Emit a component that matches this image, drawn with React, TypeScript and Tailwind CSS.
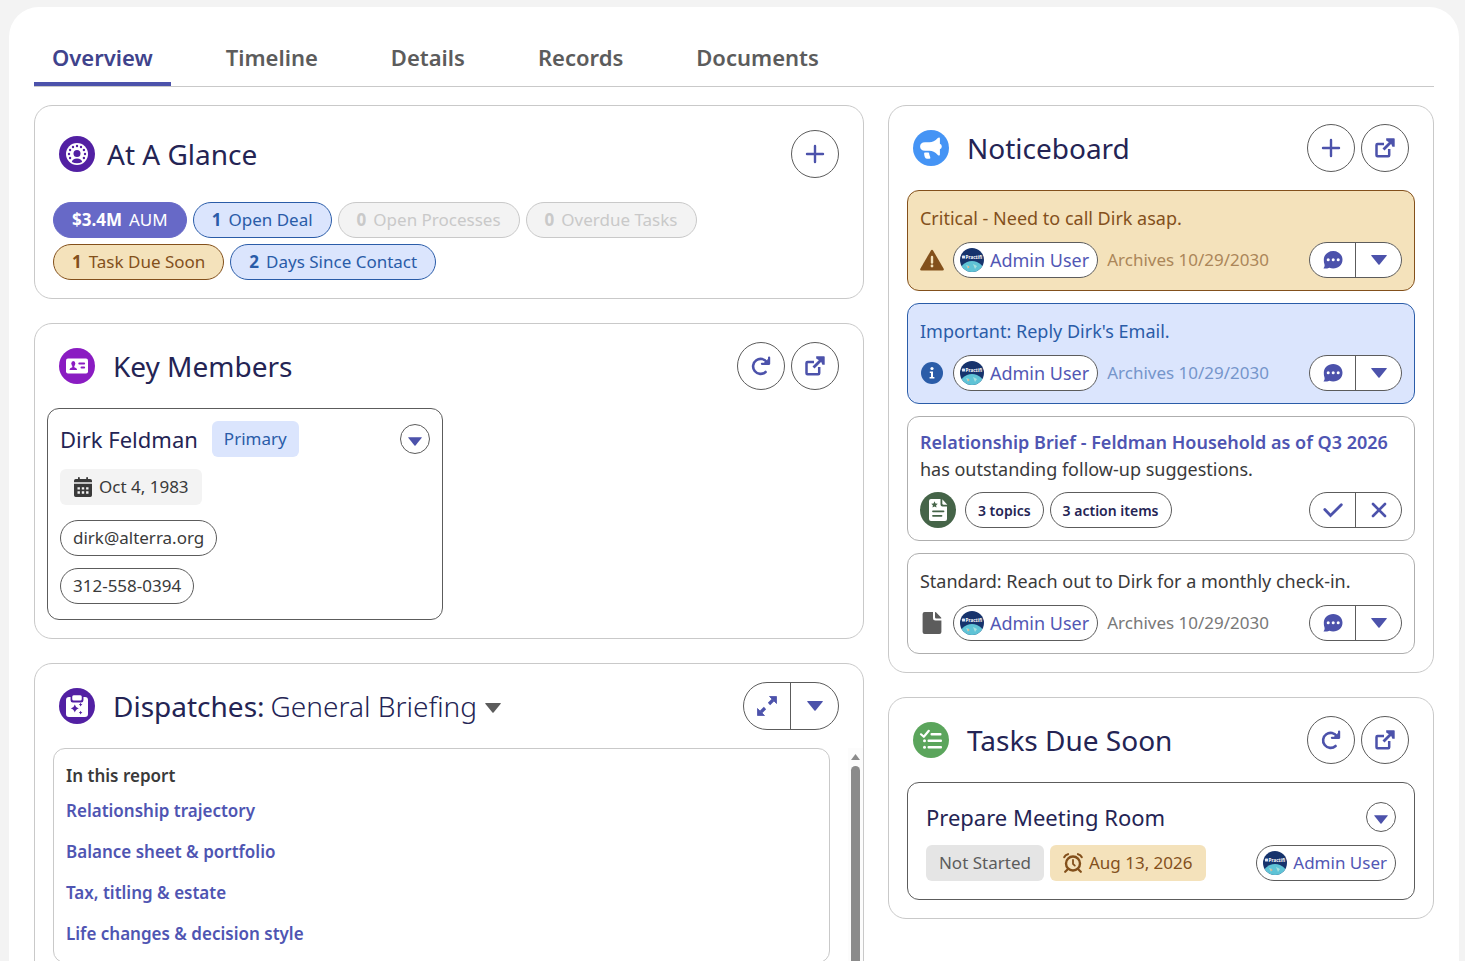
import type { ReactNode } from 'react';
import clsx from 'clsx';

const tabs = ['Overview', 'Timeline', 'Details', 'Records', 'Documents'];

const metrics = [
  { value: '$3.4M', label: 'AUM', tone: 'border-[#6769c7] bg-[#6769c7] text-white' },
  { value: '1', label: 'Open Deal', tone: 'border-[#2a5ca8] bg-[#dbe5fd] text-[#2a5ca8]' },
  { value: '0', label: 'Open Processes', tone: 'border-[#c9c9c9] bg-[#f3f3f3] text-[#c9c9c9]' },
  { value: '0', label: 'Overdue Tasks', tone: 'border-[#c9c9c9] bg-[#f3f3f3] text-[#c9c9c9]' },
  { value: '1', label: 'Task Due Soon', tone: 'border-[#83501b] bg-[#f4e2bb] text-[#83501b]' },
  { value: '2', label: 'Days Since Contact', tone: 'border-[#2a5ca8] bg-[#dbe5fd] text-[#2a5ca8]' },
];

const reportLinks = [
  'Relationship trajectory',
  'Balance sheet & portfolio',
  'Tax, titling & estate',
  'Life changes & decision style',
];

/* ---------- icons ---------- */

function PlusIcon() {
  return (
    <svg className="h-5 w-5" viewBox="0 0 20 20" stroke="currentColor" strokeWidth="2.4" strokeLinecap="round">
      <path d="M10 2v16M2 10h16" />
    </svg>
  );
}

function OpenIcon() {
  return (
    <svg className="h-5 w-5" viewBox="0 0 20 20" fill="none" stroke="currentColor">
      <path d="M9 6H2.500Q1.500 6 1.500 7v10.300q0 1 1 1h10.700q1 0 1-1V11" strokeWidth="2.500" />
      <path d="M8.500 11.500 17 3" strokeWidth="2.800" />
      <path d="M11.200.3H19q.7 0 .7.7v7.800h-2.300L16 5.400 11.200 2.600z" fill="currentColor" stroke="none" />
    </svg>
  );
}

function RefreshIcon() {
  return (
    <svg className="h-5 w-5" viewBox="0 0 20 20" fill="none" stroke="currentColor">
      <path d="M14.600 16A7.500 7.500 0 1 1 16 6.500" strokeWidth="2.600" strokeLinecap="round" />
      <path d="M18.100 1.500v6.300h-7.200" strokeWidth="2.200" strokeLinecap="round" strokeLinejoin="round" />
      <path d="M17.500 3v4h-4z" fill="currentColor" />
    </svg>
  );
}

function ExpandIcon() {
  return (
    <svg className="h-5 w-5" viewBox="0 0 20 20" fill="currentColor" stroke="currentColor">
      <path d="M12 8l4-4M8 12l-4 4" strokeWidth="3.200" />
      <path d="M12.500.5h7v7zM.5 12.500v7h7z" strokeWidth=".8" strokeLinejoin="round" />
    </svg>
  );
}

function CaretIcon({ className = 'h-[10px] w-4' }: { className?: string }) {
  return (
    <svg className={className} viewBox="0 0 16 10" fill="currentColor">
      <path d="M.6 0h14.800q.7.200.3.800L8.600 9.600q-.6.500-1.200 0L.300.800Q0 .2.600 0z" />
    </svg>
  );
}

function ChatIcon() {
  return (
    <svg className="h-5 w-5" viewBox="0 0 20 20" fill="currentColor">
      <path d="M10.200 1c5.300 0 9.300 3.800 9.300 8.700s-4 8.800-9.300 8.800c-1.400 0-2.700-.3-3.800-.8-1.500.7-3.500 1-5.500.9-.4 0-.4-.4-.2-.7.800-.9 1.100-2 .8-3.500C.9 13 .800 11.400.800 9.700.8 4.800 4.900 1 10.200 1z" />
      <g fill="#fff">
        <circle cx="5.200" cy="9.800" r="1.500" />
        <circle cx="10.200" cy="9.800" r="1.500" />
        <circle cx="15.200" cy="9.800" r="1.500" />
      </g>
    </svg>
  );
}

function CheckIcon() {
  return (
    <svg className="h-5 w-5" viewBox="0 0 20 20" fill="none" stroke="currentColor" strokeWidth="2.800" strokeLinecap="round">
      <path d="M1.800 9.500 7.500 15.500 18.300 4.800" />
    </svg>
  );
}

function CloseIcon() {
  return (
    <svg className="h-5 w-5" viewBox="0 0 20 20" fill="none" stroke="currentColor" strokeWidth="2.600" strokeLinecap="round">
      <path d="M4 4l12 12M16 4 4 16" />
    </svg>
  );
}

function WarningIcon() {
  return (
    <svg className="h-6 w-6" viewBox="0 0 24 24" fill="currentColor">
      <path d="M10.800 2.700q1.200-1.800 2.400 0L23.700 20.800q.7 1.700-1.200 1.700h-21Q-.400 22.500.3 20.800z" />
      <path d="M12 9v5.500" stroke="#f4e2bb" strokeWidth="2.400" strokeLinecap="round" />
      <circle cx="12" cy="18" r="1.400" fill="#f4e2bb" />
    </svg>
  );
}

function InfoIcon() {
  return (
    <svg className="h-6 w-6" viewBox="0 0 24 24">
      <circle cx="12" cy="12" r="11" fill="#2a5ca8" />
      <circle cx="12" cy="7.500" r="1.600" fill="#fff" />
      <path d="M9.800 10.500h3.200v5.500h1.400v1.500H9.600V16H11v-4H9.800z" fill="#fff" />
    </svg>
  );
}

function FileIcon() {
  return (
    <svg className="h-6 w-6" viewBox="0 0 24 24" fill="#5c5c5c">
      <path d="M13 1H4.600Q2.600 1 2.600 3v18q0 2 2 2h14.800q2 0 2-2V9.500h-5.900Q13 9.500 13 7z" />
      <path d="M15 1.300v4.900q0 1.300 1.300 1.300h4.900q.3-.4-.1-.9L16 1.200q-.6-.5-1 .1z" />
    </svg>
  );
}

function CalendarIcon() {
  return (
    <svg className="h-5 w-5" viewBox="0 0 20 20" fill="currentColor">
      <path d="M4 2h1V.8q0-.8.900-.8t.900.8V2h6.400V.8q0-.8.900-.8t.9.800V2h2.200Q19 2 19 3.800v1.400H1V3.800Q1 2 2.700 2zM1 6.800h18v11.400q0 1.800-1.700 1.800H2.700Q1 20 1 18.200z" />
      <path d="M4.500 10.200h2.400v2.400H4.500zM8.800 10.200h2.400v2.400H8.800zM13.100 10.200h2.400v2.400h-2.400zM4.500 14.300h2.400v2.400H4.500zM8.800 14.300h2.400v2.400H8.800zM13.100 14.300h2.400v2.400h-2.400z" fill="#f3f3f3" />
    </svg>
  );
}

function AlarmIcon() {
  return (
    <svg className="h-5 w-5" viewBox="0 0 20 20" fill="none" stroke="currentColor" strokeLinecap="round">
      <circle cx="10" cy="10.500" r="7" strokeWidth="2.400" />
      <path d="M10 7v3.800l1.800 1.800" strokeWidth="1.800" />
      <path d="M1.300 4.200Q2.300 1.800 5 1.200M18.700 4.200Q17.700 1.800 15 1.200M4.500 16.500 2.200 18.800M15.500 16.500l2.300 2.300" strokeWidth="2.200" />
    </svg>
  );
}

// White glyph on a coloured disc, used in front of every panel title
function Badge({ color, children }: { color: string; children: ReactNode }) {
  return (
    <svg className="h-9 w-9 shrink-0" viewBox="0 0 36 36" fill="#fff">
      <circle cx="18" cy="18" r="18" fill={color} />
      {children}
    </svg>
  );
}

function GlanceBadge() {
  const dots = [150, 180, 210, 240, 270, 300, 330, 0, 30];
  return (
    <Badge color="#5220a3">
      <circle cx="18" cy="18" r="11" />
      <g fill="#5220a3">
        {dots.map((deg) => (
          <circle
            key={deg}
            cx={18 + 8 * Math.cos((deg * Math.PI) / 180)}
            cy={18 + 8 * Math.sin((deg * Math.PI) / 180)}
            r="1.200"
          />
        ))}
        <circle cx="18" cy="17.500" r="3.500" />
        <path d="M12.800 26q.700-3.600 5.200-3.600t5.200 3.600q-5.200 2.600-10.400 0z" />
      </g>
    </Badge>
  );
}

function MembersBadge() {
  return (
    <Badge color="#8a1cc2">
      <rect x="7" y="10.500" width="22" height="15" rx="2" />
      <g fill="#8a1cc2">
        <ellipse cx="14.300" cy="15.500" rx="2" ry="2.600" />
        <path d="M13.300 17h2v2.200q2.700.7 2.900 2.900H10.400q.2-2.200 2.900-2.900z" />
        <rect x="19.300" y="14.600" width="6.800" height="2" rx="1" />
        <rect x="21.500" y="18.600" width="4.600" height="2" rx="1" />
      </g>
    </Badge>
  );
}

function DispatchBadge() {
  return (
    <Badge color="#5220a3">
      <path d="M10 9h2q0 5 2 5h8q2 0 2-5h2q3 0 3 3v14q0 3-3 3H10q-3 0-3-3V12q0-3 3-3z" />
      <rect x="13.200" y="7.200" width="9.600" height="5.200" rx="1.500" />
      <g fill="#5220a3">
        <path d="M15.800 16.400q.7 3.200 4 4.100-3.300.9-4 4.100-.7-3.200-4-4.100 3.300-.9 4-4.100zM21.600 14.800q.4 1.400 1.800 1.800-1.400.4-1.800 1.800-.4-1.400-1.800-1.800 1.400-.4 1.800-1.800zM21.600 22.800q.4 1.400 1.800 1.800-1.400.4-1.800 1.800-.4-1.400-1.800-1.800 1.400-.4 1.800-1.800z" />
      </g>
      <path d="M12.300 8.500v3.700q0 1.500 1.500 1.500h8.400q1.500 0 1.500-1.500V8.500" fill="none" stroke="#5220a3" strokeWidth="1.500" />
    </Badge>
  );
}

function NoticeBadge() {
  return (
    <Badge color="#4594f5">
      <path d="M12 12.300h4.500q4.200 0 8.300-4.300.7-.7 1.400-.6.700.2.700 1v5.400q1.900.5 1.900 2.700t-1.900 2.700v5.400q0 .8-.7 1-.7.100-1.400-.6-4.100-4.200-8.300-4.200H12q-4.900-.3-4.900-4.300t4.900-4.200z" />
      <path d="M12 22.500h3.400q.6 0 .7.700.300 2.400 1.200 4 .4 1.500-1 1.500h-2.500q-1.500 0-2-1.600-.600-2-.7-3.600 0-1 .9-1z" />
    </Badge>
  );
}

function TasksBadge() {
  return (
    <Badge color="#5ba55c">
      <path d="M8 12.300l2.800 2.500 5-6" fill="none" stroke="#fff" strokeWidth="2.200" strokeLinecap="round" strokeLinejoin="round" />
      <rect x="17.500" y="11" width="11" height="2.600" rx="1" />
      <rect x="14.500" y="17.400" width="14.500" height="2.600" rx="1" />
      <rect x="14.500" y="23.900" width="14.500" height="2.600" rx="1" />
      <circle cx="11.500" cy="18.700" r="1.500" />
      <circle cx="11.500" cy="25.200" r="1.500" />
    </Badge>
  );
}

function BriefBadge() {
  return (
    <Badge color="#456448">
      <path d="M20.500 7H11Q9 7 9 9v18q0 2 2 2h14q2 0 2-2V14.500h-4.500q-2 0-2-2z" />
      <path d="M22.300 7.200v4q0 1.500 1.500 1.500h3.500z" />
      <path d="M14.500 9.300l1 2.100 2.300.3-1.700 1.600.4 2.300-2-1.100-2 1.100.4-2.300-1.700-1.600 2.300-.3z" fill="#456448" />
      <path d="M13 19.300h10.500M13 23.800h8.500" stroke="#456448" strokeWidth="1.800" strokeLinecap="round" />
    </Badge>
  );
}

function Avatar() {
  return (
    <svg className="h-6 w-6 shrink-0" viewBox="0 0 24 24">
      <clipPath id="avatar-clip">
        <circle cx="12" cy="12" r="12" />
      </clipPath>
      <g clipPath="url(#avatar-clip)">
        <rect width="24" height="24" fill="#16336c" />
        <circle cx="12" cy="26" r="13" fill="#5fc3d6" />
        <path d="M6 17l3 1-1 3zM13 16l4 2-2 3z" fill="#a5dfdf" />
        <circle cx="8.500" cy="19" r=".9" fill="#e5b48a" />
        <rect x="2" y="7.600" width="3" height="3" rx=".6" fill="#dfe6f4" />
        <text x="5.600" y="11" fontSize="4.600" fontWeight="700" fill="#fff">
          Practifi
        </text>
      </g>
    </svg>
  );
}

/* ---------- building blocks ---------- */

function Panel({ children }: { children: ReactNode }) {
  return <section className="rounded-[18px] border border-[#c9c9c9] bg-white">{children}</section>;
}

function PanelHeader({ badge, title, children }: { badge: ReactNode; title: ReactNode; children: ReactNode }) {
  return (
    <header className="flex items-center px-6 py-[18px]">
      {badge}
      <h2 className="ml-[18px] flex-1 text-[28px] leading-9 text-[#242454]">{title}</h2>
      <div className="flex gap-[6px]">{children}</div>
    </header>
  );
}

function RoundButton({ label, children }: { label: string; children: ReactNode }) {
  return (
    <button
      aria-label={label}
      className="flex h-12 w-12 items-center justify-center rounded-full border border-[#5c5c5c] bg-white text-[#4c52ab]"
    >
      {children}
    </button>
  );
}

function MenuButton() {
  return (
    <button
      aria-label="Show actions"
      className="flex h-[30px] w-[30px] shrink-0 items-center justify-center rounded-full border border-[#5c5c5c] bg-white pt-1 text-[#4c52ab]"
    >
      <CaretIcon className="h-[9px] w-[14px]" />
    </button>
  );
}

function SplitButton({ labels, left, right }: { labels: [string, string]; left: ReactNode; right: ReactNode }) {
  return (
    <div className="ml-auto flex h-9 w-[93px] shrink-0 divide-x divide-[#5c5c5c] overflow-hidden rounded-full border border-[#5c5c5c] bg-white text-[#4c52ab]">
      <button aria-label={labels[0]} className="flex flex-1 items-center justify-center">
        {left}
      </button>
      <button aria-label={labels[1]} className="flex flex-1 items-center justify-center">
        {right}
      </button>
    </div>
  );
}

function UserPill({ className }: { className?: string }) {
  return (
    <a
      href="#user"
      className={clsx('flex h-9 items-center gap-[6px] rounded-full border border-[#5c5c5c] bg-white pr-2 pl-[6px] text-[#5257b4]', className)}
    >
      <Avatar />
      Admin User
    </a>
  );
}

function Notice({ icon, text, box, muted }: { icon: ReactNode; text: string; box: string; muted: string }) {
  return (
    <li className={clsx('rounded-[12px] border p-3', box)}>
      <p className="text-[18px] leading-[30px]">{text}</p>
      <div className="mt-[9px] flex items-center">
        {icon}
        <UserPill className="ml-[9px] text-[18px]" />
        <span className={clsx('ml-[9px] text-[17px]', muted)}>Archives 10/29/2030</span>
        <SplitButton labels={['Comments', 'More actions']} left={<ChatIcon />} right={<CaretIcon />} />
      </div>
    </li>
  );
}

/* ---------- panels ---------- */

function AtAGlance() {
  return (
    <Panel>
      <header className="flex items-center p-6">
        <GlanceBadge />
        <h2 className="ml-3 flex-1 text-[28px] leading-9 text-[#242454]">At A Glance</h2>
        <RoundButton label="Add">
          <PlusIcon />
        </RoundButton>
      </header>
      <div className="flex flex-wrap gap-[6px] pr-[120px] pb-[18px] pl-[18px]">
        {metrics.map((m) => (
          <button key={m.label} className={clsx('flex h-9 items-center gap-[7px] rounded-full border px-[18px] text-[17px]', m.tone)}>
            <b>{m.value}</b>
            <span>{m.label}</span>
          </button>
        ))}
      </div>
    </Panel>
  );
}

function KeyMembers() {
  return (
    <Panel>
      <PanelHeader badge={<MembersBadge />} title="Key Members">
        <RoundButton label="Refresh">
          <RefreshIcon />
        </RoundButton>
        <RoundButton label="Open">
          <OpenIcon />
        </RoundButton>
      </PanelHeader>
      <div className="grid grid-cols-2 gap-3 px-3 pb-[18px]">
        <article className="flex flex-col items-start rounded-[12px] border border-[#5c5c5c] px-3 pt-3 pb-[15px] text-[17px] text-[#3a3a3a]">
          <div className="flex w-full items-center">
            <h3 className="text-[22px] text-[#242454]">Dirk Feldman</h3>
            <span className="ml-[14px] flex h-9 items-center rounded-md bg-[#dbe5fd] px-3 text-[#2a5ca8]">Primary</span>
            <div className="ml-auto">
              <MenuButton />
            </div>
          </div>
          <span className="mt-3 flex h-9 items-center gap-[6px] rounded-md bg-[#f3f3f3] px-[13px]">
            <CalendarIcon />
            Oct 4, 1983
          </span>
          <a href="mailto:dirk@alterra.org" className="mt-[15px] flex h-9 items-center rounded-full border border-[#5c5c5c] px-3">
            dirk@alterra.org
          </a>
          <a href="tel:3125580394" className="mt-3 flex h-9 items-center rounded-full border border-[#5c5c5c] px-3">
            312-558-0394
          </a>
        </article>
      </div>
    </Panel>
  );
}

function Dispatches() {
  return (
    <Panel>
      <PanelHeader
        badge={<DispatchBadge />}
        title={
          <button className="flex items-center">
            Dispatches:<span className="ml-[6px] font-light">General Briefing</span>
            <CaretIcon className="mt-1 ml-2 h-[10px] w-4 text-[#5c5c5c]" />
          </button>
        }
      >
        <div className="flex h-12 w-24 divide-x divide-[#5c5c5c] overflow-hidden rounded-full border border-[#5c5c5c] text-[#4c52ab]">
          <button aria-label="Expand" className="flex flex-1 items-center justify-center">
            <ExpandIcon />
          </button>
          <button aria-label="More actions" className="flex flex-1 items-center justify-center">
            <CaretIcon />
          </button>
        </div>
      </PanelHeader>
      <div className="flex pl-[18px]">
        <div className="mb-6 flex-1">
          <nav className="rounded-[12px] border border-[#c9c9c9] px-3 pt-3 pb-2 text-[17px] font-semibold">
            <p className="leading-[29px] text-[#3a3a3a]">In this report</p>
            <ul>
              {reportLinks.map((link) => (
                <li key={link} className="flex h-[41px] items-center">
                  <a href="#report" className="text-[#4f55b2]">
                    {link}
                  </a>
                </li>
              ))}
            </ul>
          </nav>
        </div>
        <div className="ml-[18px] flex w-[15px] flex-col items-center bg-[#fcfcfc] pt-[6px]">
          <svg className="h-[6px] w-[9px]" viewBox="0 0 9 6" fill="#8b8b8b">
            <path d="M4.500 0 9 6H0z" />
          </svg>
          <div className="mt-[6px] w-[9px] flex-1 rounded-full bg-[#8b8b8b]" />
        </div>
      </div>
    </Panel>
  );
}

function Noticeboard() {
  return (
    <Panel>
      <PanelHeader badge={<NoticeBadge />} title="Noticeboard">
        <RoundButton label="Add">
          <PlusIcon />
        </RoundButton>
        <RoundButton label="Open">
          <OpenIcon />
        </RoundButton>
      </PanelHeader>
      <ul className="flex flex-col gap-3 px-[18px] pb-[18px]">
        <Notice
          icon={<WarningIcon />}
          text="Critical - Need to call Dirk asap."
          box="border-[#83501b] bg-[#f4e2bb] text-[#83501b]"
          muted="text-[#ab8659]"
        />
        <Notice
          icon={<InfoIcon />}
          text="Important: Reply Dirk's Email."
          box="border-[#2a5ca8] bg-[#dbe5fd] text-[#2a5ca8]"
          muted="text-[#7595cb]"
        />
        <li className="rounded-[12px] border border-[#aeaeae] p-3">
          <p className="text-[18px] leading-[27px] text-[#3a3a3a]">
            <a href="#brief" className="font-semibold text-[#4f55b2]">
              Relationship Brief - Feldman Household as of Q3 2026
            </a>{' '}
            has outstanding follow-up suggestions.
          </p>
          <div className="mt-[9px] flex items-center gap-[6px]">
            <BriefBadge />
            <button className="ml-[3px] h-9 rounded-full border border-[#5c5c5c] px-3 text-[14px] font-semibold text-[#242454]">
              3 topics
            </button>
            <button className="h-9 rounded-full border border-[#5c5c5c] px-3 text-[14px] font-semibold text-[#242454]">
              3 action items
            </button>
            <SplitButton labels={['Accept', 'Dismiss']} left={<CheckIcon />} right={<CloseIcon />} />
          </div>
        </li>
        <Notice
          icon={<FileIcon />}
          text="Standard: Reach out to Dirk for a monthly check-in."
          box="border-[#aeaeae] bg-white text-[#3a3a3a]"
          muted="text-[#787878]"
        />
      </ul>
    </Panel>
  );
}

function TasksDueSoon() {
  return (
    <Panel>
      <PanelHeader badge={<TasksBadge />} title="Tasks Due Soon">
        <RoundButton label="Refresh">
          <RefreshIcon />
        </RoundButton>
        <RoundButton label="Open">
          <OpenIcon />
        </RoundButton>
      </PanelHeader>
      <div className="px-[18px] pb-[18px]">
        <article className="rounded-[12px] border border-[#5c5c5c] p-[18px] text-[17px]">
          <div className="flex items-center justify-between">
            <h3 className="text-[22px] leading-8 text-[#242454]">Prepare Meeting Room</h3>
            <MenuButton />
          </div>
          <div className="mt-3 flex items-center gap-[6px]">
            <span className="flex h-9 items-center rounded-md bg-[#e5e5e5] px-[13px] text-[#5c5c5c]">Not Started</span>
            <span className="flex h-9 items-center gap-[6px] rounded-md bg-[#f4e2bb] px-[13px] text-[#83501b]">
              <AlarmIcon />
              Aug 13, 2026
            </span>
            <UserPill className="ml-auto" />
          </div>
        </article>
      </div>
    </Panel>
  );
}

export default function App() {
  return (
    <div className="h-screen overflow-hidden bg-[#f3f3f3] pt-[7px] pr-[6px] pl-[9px] font-['Noto_Sans','Open_Sans',sans-serif]">
      <main className="min-h-full rounded-t-[30px] bg-white px-[25px] pt-[25px]">
        <nav className="flex gap-[37px] border-b border-[#c9c9c9]">
          {tabs.map((tab, i) => (
            <a
              key={tab}
              href={`#${tab.toLowerCase()}`}
              className={clsx(
                'border-b-4 px-[18px] pt-[6px] pb-[6px] text-[22px] leading-[38px] font-semibold',
                i === 0 ? 'border-[#4c52ab] text-[#40438c]' : 'border-transparent text-[#5c5c5c]'
              )}
            >
              {tab}
            </a>
          ))}
        </nav>
        <div className="mt-[18px] grid grid-cols-[minmax(0,1.52fr)_minmax(0,1fr)] items-start gap-6">
          <div className="flex flex-col gap-6">
            <AtAGlance />
            <KeyMembers />
            <Dispatches />
          </div>
          <div className="flex flex-col gap-6">
            <Noticeboard />
            <TasksDueSoon />
          </div>
        </div>
      </main>
    </div>
  );
}
